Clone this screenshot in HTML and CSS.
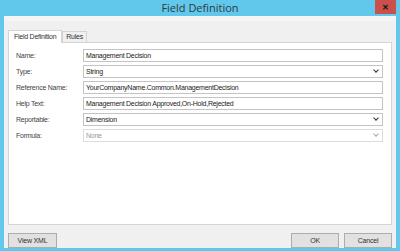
FILE: index.html
```html
<!DOCTYPE html>
<html lang="en">

<head>
    <meta charset="UTF-8">
    <meta name="viewport" content="width=device-width, initial-scale=1.0">
    <title>Field Definition</title>
    <link rel="stylesheet" href="styles.css">
</head>

<body>
    <div class="window">
        <div class="titlebar">
            <span class="title">Field Definition</span>
            <div class="close">&#x2715;</div>
        </div>
        <div class="client">
            <div class="tabs">
                <div class="tab active">Field Definition</div>
                <div class="tab">Rules</div>
            </div>
            <div class="panel">
                <div class="form">
                    <label>Name:</label>
                    <div class="field">Management Decision</div>

                    <label>Type:</label>
                    <div class="field select">String<span class="chev"></span></div>

                    <label>Reference Name:</label>
                    <div class="field">YourCompanyName.Common.ManagementDecision</div>

                    <label>Help Text:</label>
                    <div class="field">Management Decision Approved,On-Hold,Rejected</div>

                    <label>Reportable:</label>
                    <div class="field select">Dimension<span class="chev"></span></div>

                    <label>Formula:</label>
                    <div class="field select disabled">None<span class="chev"></span></div>
                </div>
            </div>
            <div class="footer">
                <button class="btn wide">View XML</button>
                <div class="right">
                    <button class="btn">OK</button>
                    <button class="btn">Cancel</button>
                </div>
            </div>
        </div>
    </div>
</body>

</html>
```

FILE: styles.css
```css
body {
    margin: 0;
    padding: 0;
    background-color: #62c8eb;
    font-family: "Liberation Sans", Arial, sans-serif;
    color: #222;
}

.window {
    width: 400px;
    height: 251px;
    display: flex;
    flex-direction: column;
}

.titlebar {
    height: 19px;
    display: flex;
    justify-content: center;
    align-items: center;
    position: relative;
}

.title {
    font-family: "Open Sans", sans-serif;
    font-size: 11px;
    color: #2b3a40;
    margin-top: -1px;
}

.close {
    position: absolute;
    top: 0;
    right: 4px;
    width: 21px;
    height: 14px;
    background-color: #c9504b;
    color: #111;
    font-size: 8px;
    font-weight: bold;
    display: flex;
    justify-content: center;
    align-items: center;
}

.client {
    margin: 0 4px 3px 4px;
    flex: 1;
    background-color: #f0f0f0;
    border-top: 5px solid #f5f5f5;
    padding: 9px 4px 0 4px;
    display: flex;
    flex-direction: column;
    font-size: 7px;
    letter-spacing: -0.25px;
}

.tabs {
    display: flex;
    align-items: flex-end;
    height: 12px;
}

.tab {
    border: 1px solid #d4d4d4;
    border-bottom: none;
    padding: 0 3px;
    height: 10px;
    line-height: 10px;
    background-color: #f0f0f0;
    color: #333;
}

.tab.active {
    background-color: #fff;
    height: 12px;
    line-height: 12px;
    padding: 0 5px;
    margin-bottom: -1px;
    position: relative;
}

.panel {
    background-color: #fff;
    border: 1px solid #d4d4d4;
    height: 175px;
    padding: 6px 8px 0 6px;
}

.form {
    display: grid;
    grid-template-columns: 68px 1fr;
    row-gap: 3px;
    align-items: center;
}

.form label {
    color: #444;
    padding-left: 1px;
}

.field {
    height: 11px;
    border: 1px solid #c4c4c4;
    padding: 0 2px;
    line-height: 11px;
    color: #222;
    position: relative;
    white-space: nowrap;
}

.select .chev {
    position: absolute;
    right: 4px;
    top: 2px;
    width: 3px;
    height: 3px;
    border-right: 1px solid #333;
    border-bottom: 1px solid #333;
    transform: rotate(45deg);
}

.disabled {
    border-color: #dcdcdc;
    color: #999;
}

.disabled .chev {
    border-color: #aaa;
}

.footer {
    display: flex;
    justify-content: space-between;
    margin-top: 8px;
}

.right {
    display: flex;
    gap: 5px;
}

.btn {
    width: 48px;
    height: 15px;
    background-color: #e1e1e1;
    border: 1px solid #adadad;
    font-family: "Liberation Sans", Arial, sans-serif;
    font-size: 7px;
    letter-spacing: -0.2px;
    color: #333;
    padding: 0;
}

.btn.wide {
    width: 49px;
}
```
